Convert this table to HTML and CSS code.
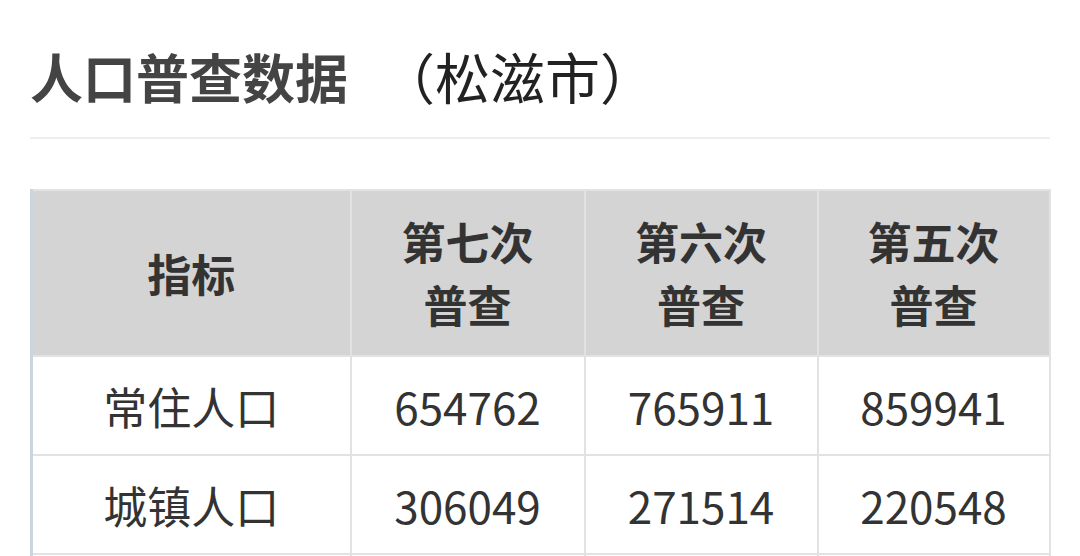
FILE: index.html
```html
<!DOCTYPE html>
<html lang="zh-CN">
<head>
<meta charset="utf-8">
<title>人口普查数据</title>
<link rel="stylesheet" href="styles.css">
</head>
<body>
<div class="page">
  <h1 class="title"><span class="title-main">人口普查数据</span> <span class="title-sub">（松滋市）</span></h1>
  <div class="rule"></div>
  <table class="census">
    <colgroup>
      <col class="c1"><col class="c2"><col class="c3"><col class="c4">
    </colgroup>
    <thead>
      <tr>
        <th>指标</th>
        <th>第七次<br>普查</th>
        <th>第六次<br>普查</th>
        <th>第五次<br>普查</th>
      </tr>
    </thead>
    <tbody>
      <tr><td>常住人口</td><td>654762</td><td>765911</td><td>859941</td></tr>
      <tr><td>城镇人口</td><td>306049</td><td>271514</td><td>220548</td></tr>
      <tr class="next"><td></td><td></td><td></td><td></td></tr>
    </tbody>
  </table>
</div>
</body>
</html>
```

FILE: styles.css
```css
html, body {
  margin: 0;
  padding: 0;
  background: #ffffff;
}
.page {
  padding: 0 30px;
  font-family: "Noto Sans CJK SC", "Noto Sans", sans-serif;
}
.title {
  margin: 0;
  padding-top: 43px;
  font-size: 53px;
  line-height: 64px;
  height: 64px;
  white-space: nowrap;
}
.title-main {
  font-weight: 700;
  color: #444444;
}
.title-sub {
  margin-left: 20px;
  font-size: 55px;
  font-weight: 400;
  color: #222222;
}
.rule {
  margin-top: 30px;
  height: 2px;
  background: #eeeeee;
}
.census {
  margin-top: 50px;
  width: 1020px;
  border-collapse: collapse;
  table-layout: fixed;
  border-top: 2px solid #ccd4dc;
  border-left: 3px solid #ccd4dc;
}
.c1 { width: 319px; }
.c2 { width: 234px; }
.c3 { width: 233px; }
.c4 { width: 232px; }
.census th,
.census td {
  border: 2px solid #e2e2e2;
  text-align: center;
  padding: 0;
  font-size: 44px;
  color: #333333;
}
.census th {
  background: #d4d4d4;
  font-weight: 700;
  line-height: 63px;
  height: 164px;
}
.census td {
  font-weight: 400;
  height: 97px;
  line-height: 60px;
}
.census .next td {
  height: 60px;
}
```
